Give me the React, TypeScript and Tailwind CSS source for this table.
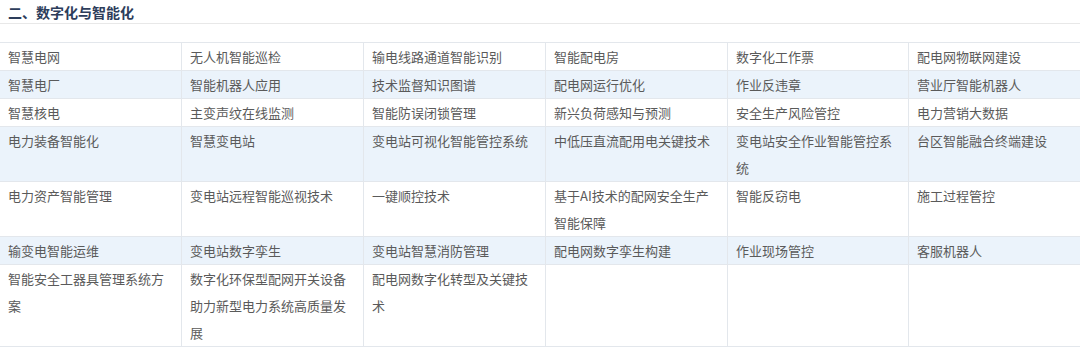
import React from 'react';

const rows: { cells: string[]; shaded: boolean }[] = [
  { cells: ['智慧电网', '无人机智能巡检', '输电线路通道智能识别', '智能配电房', '数字化工作票', '配电网物联网建设'], shaded: false },
  { cells: ['智慧电厂', '智能机器人应用', '技术监督知识图谱', '配电网运行优化', '作业反违章', '营业厅智能机器人'], shaded: true },
  { cells: ['智慧核电', '主变声纹在线监测', '智能防误闭锁管理', '新兴负荷感知与预测', '安全生产风险管控', '电力营销大数据'], shaded: false },
  { cells: ['电力装备智能化', '智慧变电站', '变电站可视化智能管控系统', '中低压直流配用电关键技术', '变电站安全作业智能管控系统', '台区智能融合终端建设'], shaded: true },
  { cells: ['电力资产智能管理', '变电站远程智能巡视技术', '一键顺控技术', '基于AI技术的配网安全生产智能保障', '智能反窃电', '施工过程管控'], shaded: false },
  { cells: ['输变电智能运维', '变电站数字孪生', '变电站智慧消防管理', '配电网数字孪生构建', '作业现场管控', '客服机器人'], shaded: true },
  { cells: ['智能安全工器具管理系统方案', '数字化环保型配网开关设备助力新型电力系统高质量发展', '配电网数字化转型及关键技术', '', '', ''], shaded: false },
];

const App: React.FC = () => {
  return (
    <div
      className="w-[1080px] h-[354px] bg-white overflow-hidden"
      style={{ fontFamily: '"Noto Sans CJK SC", "Noto Sans", sans-serif' }}
    >
      {/* Section title */}
      <div className="h-[24px] border-b border-[#e8e8e8] px-2 flex items-center">
        <h3 className="text-[14px] font-bold text-[#2d3d5b] leading-none">二、数字化与智能化</h3>
      </div>

      {/* Table */}
      <div className="mt-[18px] w-[1092px] border-t border-[#e3e7ec] grid grid-cols-[182px_182px_182px_182px_181px_183px]">
        {rows.map((row, r) =>
          row.cells.map((cell, c) => (
            <div
              key={`${r}-${c}`}
              className={`border-b border-[#e3e7ec] pl-2 pr-[10px] text-[13px] leading-[27px] text-[#5a5a5a] ${
                c < 5 ? 'border-r' : ''
              } ${row.shaded ? 'bg-[#ebf3fb]' : 'bg-white'}`}
            >
              {cell}
            </div>
          ))
        )}
      </div>
    </div>
  );
};

export default App;
